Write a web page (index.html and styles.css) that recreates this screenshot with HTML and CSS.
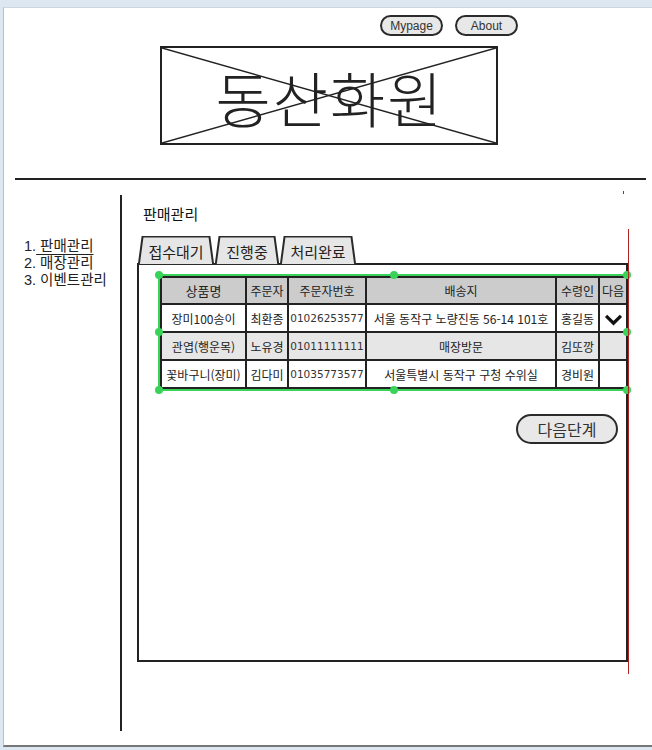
FILE: index.html
```html
<!DOCTYPE html>
<html lang="ko">
<head>
    <meta charset="UTF-8">
    <meta name="viewport" content="width=device-width, initial-scale=1.0">
    <title>동산화원 - 판매관리</title>
    <link rel="stylesheet" href="styles.css">
</head>
<body>
    <div class="page">
        <div class="top-links">
            <button class="pill-btn">Mypage</button>
            <button class="pill-btn">About</button>
        </div>

        <div class="logo">
            <svg class="logo-cross" viewBox="0 0 100 100" preserveAspectRatio="none">
                <line x1="0" y1="0" x2="100" y2="100" vector-effect="non-scaling-stroke"></line>
                <line x1="100" y1="0" x2="0" y2="100" vector-effect="non-scaling-stroke"></line>
            </svg>
            <span class="logo-text">동산화원</span>
        </div>

        <div class="rule"></div>

        <div class="main">
            <nav class="sidebar">
                <div class="nav-item">1.<span class="nav-link"> 판매관리</span></div>
                <div class="nav-item">2. 매장관리</div>
                <div class="nav-item">3. 이벤트관리</div>
            </nav>

            <div class="divider"></div>

            <div class="content">
                <h2 class="page-title">판매관리</h2>

                <div class="tabs">
                    <div class="tab tab-wide">
                        <svg class="tab-shape" viewBox="0 0 100 100" preserveAspectRatio="none">
                            <polygon points="6,2 94,2 99,100 1,100" vector-effect="non-scaling-stroke"></polygon>
                        </svg>
                        <span>접수대기</span>
                    </div>
                    <div class="tab">
                        <svg class="tab-shape" viewBox="0 0 100 100" preserveAspectRatio="none">
                            <polygon points="7,2 93,2 99,100 1,100" vector-effect="non-scaling-stroke"></polygon>
                        </svg>
                        <span>진행중</span>
                    </div>
                    <div class="tab tab-wide">
                        <svg class="tab-shape" viewBox="0 0 100 100" preserveAspectRatio="none">
                            <polygon points="6,2 94,2 99,100 1,100" vector-effect="non-scaling-stroke"></polygon>
                        </svg>
                        <span>처리완료</span>
                    </div>
                </div>

                <div class="panel">
                    <div class="table-frame">
                        <table class="orders">
                            <colgroup>
                                <col class="c-name">
                                <col class="c-buyer">
                                <col class="c-phone">
                                <col class="c-addr">
                                <col class="c-recv">
                                <col class="c-next">
                            </colgroup>
                            <tr class="head">
                                <th class="strong">상품명</th>
                                <th>주문자</th>
                                <th>주문자번호</th>
                                <th>배송지</th>
                                <th>수령인</th>
                                <th>다음</th>
                            </tr>
                            <tr>
                                <td>장미100송이</td>
                                <td>최환종</td>
                                <td class="num">01026253577</td>
                                <td>서울 동작구 노량진동 56-14 101호</td>
                                <td>홍길동</td>
                                <td>
                                    <svg class="check" viewBox="0 0 20 14">
                                        <polyline points="2,3 10,11 18,3"></polyline>
                                    </svg>
                                </td>
                            </tr>
                            <tr class="shaded">
                                <td>관엽(행운목)</td>
                                <td>노유경</td>
                                <td class="num">01011111111</td>
                                <td>매장방문</td>
                                <td>김또깡</td>
                                <td></td>
                            </tr>
                            <tr>
                                <td>꽃바구니(장미)</td>
                                <td>김다미</td>
                                <td class="num">01035773577</td>
                                <td>서울특별시 동작구 구청 수위실</td>
                                <td>경비원</td>
                                <td></td>
                            </tr>
                        </table>
                        <!-- 선택 핸들 -->
                        <span class="handle h-tl"></span>
                        <span class="handle h-tm"></span>
                        <span class="handle h-tr"></span>
                        <span class="handle h-ml"></span>
                        <span class="handle h-mr"></span>
                        <span class="handle h-bl"></span>
                        <span class="handle h-bm"></span>
                        <span class="handle h-br"></span>
                    </div>

                    <div class="actions">
                        <button class="pill-btn next-btn">다음단계</button>
                    </div>
                </div>
            </div>
        </div>

        <div class="guide-line"></div>
        <div class="guide-dot"></div>
    </div>
</body>
</html>
```

FILE: styles.css
```css
* {
    margin: 0;
    padding: 0;
    box-sizing: border-box;
}

body {
    background-color: #dde7f2;
    font-family: 'Liberation Sans', 'Noto Sans CJK KR', sans-serif;
    color: #222;
    overflow: hidden;
}

.page {
    position: relative;
    margin: 7px 0 0 3px;
    height: 740px;
    background-color: #fff;
    border-left: 1px solid #b4c0cc;
    border-top: 1px solid #ccd7e2;
    border-bottom: 2px solid #777;
}

.top-links {
    display: flex;
    gap: 12px;
    padding: 7px 0 0 376px;
}

.pill-btn {
    height: 21px;
    padding: 0 14px;
    background-color: #e8e8e8;
    border: 2px solid #2b2b2b;
    border-radius: 11px;
    font-family: 'Liberation Sans', 'Noto Sans CJK KR', sans-serif;
    font-size: 12px;
    color: #333;
    cursor: pointer;
}

.top-links .pill-btn {
    width: 63px;
    padding: 0;
}

.logo {
    position: relative;
    width: 338px;
    height: 99px;
    margin: 10px 0 0 156px;
    border: 2px solid #222;
    display: flex;
    align-items: center;
    justify-content: center;
}

.logo-cross {
    position: absolute;
    inset: 0;
    width: 100%;
    height: 100%;
}

.logo-cross line {
    stroke: #222;
    stroke-width: 1.5;
}

.logo-text {
    position: relative;
    font-family: 'Noto Sans CJK KR', sans-serif;
    font-size: 60px;
    font-weight: 300;
    letter-spacing: 2px;
    line-height: 1;
    color: #222;
    margin: 2px 0 0 2px;
}

.rule {
    width: 631px;
    height: 2px;
    margin: 33px 0 0 11px;
    background-color: #222;
}

.main {
    display: flex;
    margin-top: 15px;
}

.sidebar {
    width: 116px;
    padding: 43px 0 0 20px;
    font-family: 'Liberation Sans', 'Noto Sans CJK KR', sans-serif;
    font-size: 14.5px;
    line-height: 17px;
    color: #222;
}

.nav-link {
    text-decoration: underline;
    text-underline-offset: 3px;
}

.divider {
    width: 2px;
    height: 536px;
    background-color: #222;
}

.content {
    padding-left: 15px;
}

.page-title {
    font-family: 'Noto Sans CJK KR', sans-serif;
    font-size: 15px;
    font-weight: 400;
    line-height: 18px;
    margin: 10px 0 0 6px;
    color: #111;
}

.tabs {
    display: flex;
    gap: 1px;
    height: 29px;
    margin: 13px 0 -2px 1px;
    position: relative;
    z-index: 1;
}

.tab {
    position: relative;
    width: 64px;
    display: flex;
    align-items: center;
    justify-content: center;
    font-family: 'Noto Sans CJK KR', sans-serif;
    font-size: 15px;
    color: #222;
}

.tab-wide {
    width: 76px;
}

.tab span {
    position: relative;
    margin-top: 1px;
}

.tab-shape {
    position: absolute;
    inset: 0;
    width: 100%;
    height: 100%;
}

.tab-shape polygon {
    fill: #e6e6e6;
    stroke: #2b2b2b;
    stroke-width: 2;
}

.panel {
    width: 491px;
    height: 399px;
    border: 2px solid #222;
}

.table-frame {
    position: relative;
    width: 470px;
    margin: 9px 0 0 19px;
    border: 2px solid #3ad35a;
}

.orders {
    width: 100%;
    table-layout: fixed;
    border-collapse: collapse;
    font-family: 'Noto Sans CJK KR', sans-serif;
    font-size: 12px;
    color: #222;
    text-align: center;
}

.c-name { width: 85px; }
.c-buyer { width: 42px; }
.c-phone { width: 78px; }
.c-addr { width: 190px; }
.c-recv { width: 43px; }
.c-next { width: 28px; }

.orders th,
.orders td {
    border: 2px solid #222;
    height: 28px;
    padding: 0;
    font-weight: 400;
    white-space: nowrap;
    overflow: hidden;
}

.orders .head th {
    background-color: #cccccc;
    height: 27px;
}

.orders th.strong {
    font-size: 13px;
}

.orders .shaded td {
    background-color: #e6e6e6;
}

.orders td.num {
    font-family: 'DejaVu Sans', 'Liberation Sans', sans-serif;
    font-size: 10.5px;
    color: #333;
}

.check {
    display: block;
    width: 19px;
    height: 13px;
    margin: 2px auto 0;
}

.check polyline {
    fill: none;
    stroke: #111;
    stroke-width: 3.5;
}

.handle {
    position: absolute;
    width: 8px;
    height: 8px;
    border-radius: 50%;
    background-color: #3ad35a;
}

.h-tl { left: -5px; top: -5px; }
.h-tm { left: 230px; top: -5px; }
.h-tr { right: -5px; top: -5px; }
.h-ml { left: -5px; top: 52px; }
.h-mr { right: -5px; top: 52px; }
.h-bl { left: -5px; bottom: -5px; }
.h-bm { left: 230px; bottom: -5px; }
.h-br { right: -5px; bottom: -5px; }

.actions {
    display: flex;
    justify-content: flex-end;
    padding: 23px 8px 0 0;
}

.next-btn {
    width: 102px;
    height: 30px;
    border-radius: 15px;
    font-family: 'Noto Sans CJK KR', sans-serif;
    font-size: 16px;
    color: #333;
}

/* 편집 가이드 표시 */
.guide-line {
    position: absolute;
    left: 624px;
    top: 221px;
    width: 1px;
    height: 445px;
    background-color: #b22222;
}

.guide-dot {
    position: absolute;
    left: 619px;
    top: 183px;
    width: 1px;
    height: 3px;
    background-color: #b22222;
}
```
